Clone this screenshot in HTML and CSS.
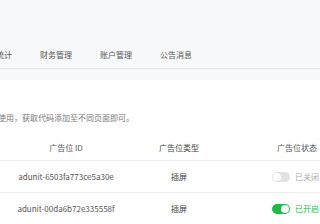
FILE: index.html
```
<!DOCTYPE html>
<html lang="zh-CN">
<head>
<meta charset="utf-8">
<link rel="stylesheet" href="styles.css">
</head>
<body>
<div class="top">
  <div class="tabs">
    <span class="tab">统计</span>
    <span class="tab">财务管理</span>
    <span class="tab">账户管理</span>
    <span class="tab">公告消息</span>
  </div>
</div>
<div class="band"></div>
<div class="content">
  <p class="hint">使用，获取代码添加至不同页面即可。</p>
  <div class="table">
    <div class="row head">
      <div class="c1">广告位 ID</div>
      <div class="c2">广告位类型</div>
      <div class="c3">广告位状态</div>
    </div>
    <div class="row">
      <div class="c1">adunit-6503fa773ce5a30e</div>
      <div class="c2">插屏</div>
      <div class="c3"><span class="sw"></span><span class="lbl">已关闭</span></div>
    </div>
    <div class="row">
      <div class="c1">adunit-00da6b72e335558f</div>
      <div class="c2">插屏</div>
      <div class="c3"><span class="sw on"></span><span class="lbl on">已开启</span></div>
    </div>
  </div>
</div>
</body>
</html>
```
FILE: styles.css
```
html, body { margin: 0; padding: 0; }
body {
  width: 320px;
  height: 224px;
  overflow: hidden;
  background: #fff;
  font-family: "Noto Sans CJK SC", "Noto Sans", sans-serif;
  font-size: 8px;
  color: #555;
}
.top {
  height: 68px;
  background: #f7f8fa;
  border-bottom: 1px solid #e6e7ea;
  display: flex;
  align-items: flex-end;
}
.tabs {
  display: flex;
  gap: 28px;
  margin-left: -4px;
  padding-bottom: 7px;
}
.tab { line-height: 12px; color: #555; white-space: nowrap; }
.band { height: 11px; background: #f7f8fa; }
.content { overflow: hidden; }
.hint {
  margin: 32px 0 0 -2px;
  line-height: 12px;
  color: #777;
  white-space: nowrap;
}
.table { margin-top: 11px; width: 380px; }
.row {
  display: grid;
  grid-template-columns: 132px 94px 142px;
  height: 31px;
  align-items: center;
  border-bottom: 1px solid #eeeeee;
}
.row.head { height: 25px; color: #555; }
.c1, .c2, .c3 { text-align: center; white-space: nowrap; line-height: 12px; }
.c2 { color: #444; }
.c3 { display: flex; align-items: center; justify-content: center; gap: 5px; }
.row:not(.head) .c3 { justify-content: flex-start; padding-left: 46px; }
.sw {
  position: relative;
  width: 18px;
  height: 10px;
  border-radius: 5px;
  background: #e2e2e2;
}
.sw::after {
  content: "";
  position: absolute;
  top: 1px;
  left: 1px;
  width: 8px;
  height: 8px;
  border-radius: 50%;
  background: #fff;
}
.sw.on { background: #1fb944; }
.sw.on::after { left: 9px; }
.lbl { color: #aaa; }
.lbl.on { color: #1fb944; }
```
